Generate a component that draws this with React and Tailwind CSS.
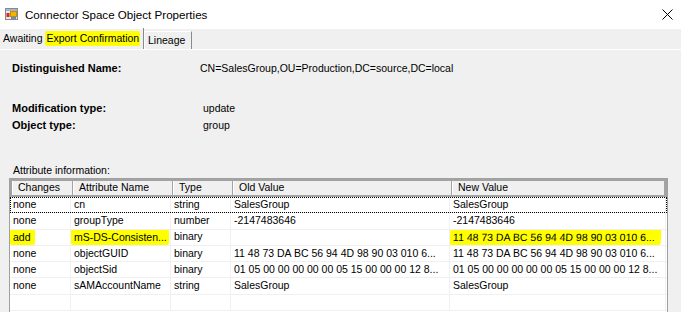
import React from "react"

const font = { fontFamily: '"Liberation Sans", Arial, sans-serif' }

const cols = ["w-[61px]", "w-[100px]", "w-[60px]", "w-[219px]", "w-[216px]"]

const headers = ["Changes", "Attribute Name", "Type", "Old Value", "New Value"]

const rows = [
  ["none", "cn", "string", "SalesGroup", "SalesGroup"],
  ["none", "groupType", "number", "-2147483646", "-2147483646"],
  ["add", "mS-DS-Consisten...", "binary", "", "11 48 73 DA BC 56 94 4D 98 90 03 010 6..."],
  ["none", "objectGUID", "binary", "11 48 73 DA BC 56 94 4D 98 90 03 010 6...", "11 48 73 DA BC 56 94 4D 98 90 03 010 6..."],
  ["none", "objectSid", "binary", "01 05 00 00 00 00 00 05 15 00 00 00 12 8...", "01 05 00 00 00 00 00 05 15 00 00 00 12 8..."],
  ["none", "sAMAccountName", "string", "SalesGroup", "SalesGroup"],
  ["", "", "", "", ""],
]

function AppIcon() {
  return (
    <svg width="13" height="12" viewBox="0 0 13 12">
      <rect x="0.5" y="0.5" width="12" height="11" fill="#e8e8e8" stroke="#8a8a8a" />
      <rect x="1" y="1" width="11" height="2" fill="#9fb7d6" />
      <rect x="1.5" y="5" width="3" height="4" fill="#d8261e" />
      <rect x="5.5" y="3.5" width="6" height="5" fill="#f5b400" stroke="#c98a00" />
      <rect x="6" y="9" width="5" height="2" fill="#5b8fd0" />
    </svg>
  )
}

function Cell({ i, value, row }) {
  const hl = row === 2 && (i === 0 || i === 1 || i === 4)
  return (
    <div className={`${cols[i]} h-full shrink-0 border-r border-[#f0f0f0] pl-[3px] flex items-center overflow-hidden whitespace-nowrap`}>
      {hl ? (
        <span
          className={`bg-[#ffff00] rounded-[2px] -ml-[3px] pl-[3px] leading-[16px] h-[16px] ${
            i === 4 ? "w-[211px] -skew-x-2" : i === 1 ? "pr-[2px]" : "pr-[4px]"
          }`}
        >
          {value}
        </span>
      ) : (
        value
      )}
    </div>
  )
}

export default function App() {
  return (
    <div className="w-[681px] h-[312px] overflow-hidden bg-[#f0f0f0] text-black flex flex-col" style={font}>
      {/* Title bar */}
      <div className="h-[29px] bg-white flex items-center shrink-0">
        <div className="ml-[5px] mt-[-1px]">
          <AppIcon />
        </div>
        <span className="ml-[7px] text-[11.6px]">Connector Space Object Properties</span>
        <svg className="ml-auto mr-[8px]" width="11" height="11" viewBox="0 0 11 11">
          <path d="M0.5 0.5 L10.5 10.5 M10.5 0.5 L0.5 10.5" stroke="#000" strokeWidth="1" />
        </svg>
      </div>

      {/* Tabs */}
      <div className="h-[21px] shrink-0 flex items-end border-b border-white text-[10.5px]">
        <div className="h-[21px] w-[144px] border-r border-[#8a8a8a] flex items-center pl-[3px]">
          Awaiting&nbsp;
          <span className="bg-[#ffff00] rounded-[2px] px-[1px] leading-[15px]">Export Confirmation</span>
        </div>
        <div className="h-[18px] w-[48px] border-t border-l border-white border-r border-r-[#8a8a8a] flex items-center pl-[3px]">
          Lineage
        </div>
      </div>

      {/* Properties */}
      <div className="text-[10.5px] leading-[13px] pl-[12px]">
        <div className="flex mt-[12px]">
          <span className="w-[188px] font-bold text-[11px]">Distinguished Name:</span>
          <span>CN=SalesGroup,OU=Production,DC=source,DC=local</span>
        </div>
        <div className="flex mt-[27px]">
          <span className="w-[191px] font-bold text-[11px]">Modification type:</span>
          <span>update</span>
        </div>
        <div className="flex mt-[4px]">
          <span className="w-[191px] font-bold text-[11px]">Object type:</span>
          <span>group</span>
        </div>
        <div className="mt-[32px] pl-[1px]">Attribute information:</div>
      </div>

      {/* Attribute list */}
      <div className="ml-[9px] mt-[1px] w-[659px] flex-1 bg-white border-l border-t border-r border-[#a0a0a0] text-[10.5px]">
        <div className="flex h-[18px] bg-[#f0f0f0] border-2 border-[#a3a3a3]">
          {headers.map((h, i) => (
            <div
              key={h}
              className={`${cols[i]} ${i === 4 ? "flex-1" : ""} shrink-0 border-r border-[#a3a3a3] border-l border-l-white pl-[5px] flex items-center`}
            >
              {h}
            </div>
          ))}
        </div>
        {rows.map((r, ri) => (
          <div
            key={ri}
            className={`flex h-[16.3px] border-b border-[#f0f0f0] ${
              ri === 0 ? "outline-1 outline-dotted outline-black -outline-offset-1" : ""
            }`}
          >
            {r.map((v, i) => (
              <Cell key={i} i={i} value={v} row={ri} />
            ))}
          </div>
        ))}
      </div>
    </div>
  )
}
